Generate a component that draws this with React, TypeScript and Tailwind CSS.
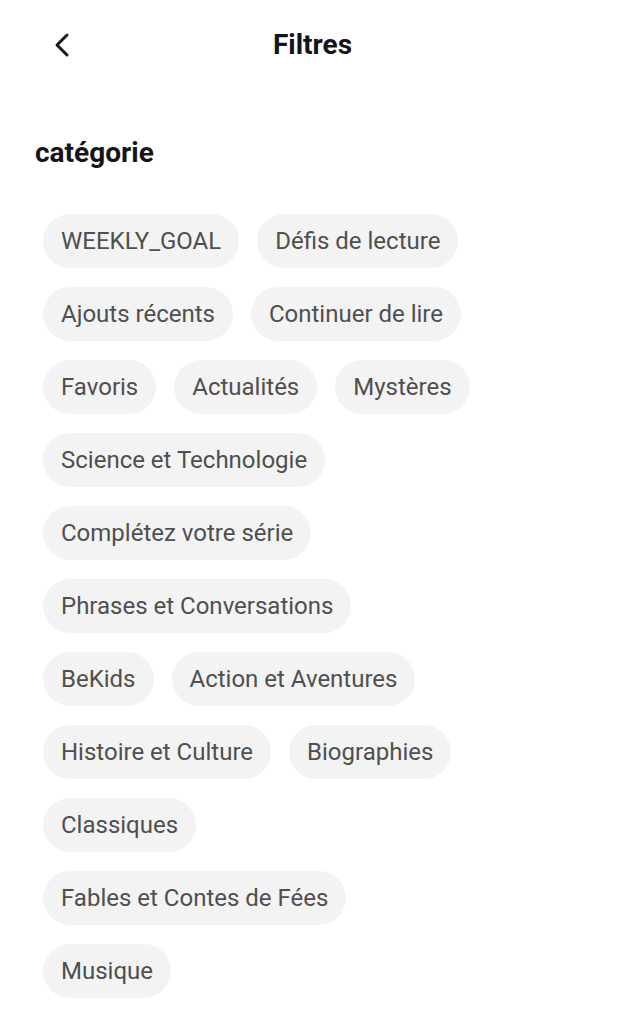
import { ChevronLeft } from 'lucide-react';

const categories = [
  'WEEKLY_GOAL',
  'Défis de lecture',
  'Ajouts récents',
  'Continuer de lire',
  'Favoris',
  'Actualités',
  'Mystères',
  'Science et Technologie',
  'Complétez votre série',
  'Phrases et Conversations',
  'BeKids',
  'Action et Aventures',
  'Histoire et Culture',
  'Biographies',
  'Classiques',
  'Fables et Contes de Fées',
  'Musique',
];

export default function App() {
  return (
    <div className="w-[625px] min-h-[1024px] bg-white font-['Roboto',sans-serif]">
      {/* header */}
      <header className="relative h-[90px] flex items-center justify-center">
        <button className="absolute left-[42px] top-[25px] text-[#1a1a1a]">
          <ChevronLeft size={40} strokeWidth={1.8} />
        </button>
        <h1 className="text-[28px] font-bold text-[#14151a]">Filtres</h1>
      </header>

      <section className="px-[35px] pt-[43px]">
        <h2 className="text-[28px] font-bold text-[#14151a] leading-[40px]">catégorie</h2>

        <div className="mt-[41px] ml-[8px] w-[432px] flex flex-wrap gap-x-[18px] gap-y-[19px]">
          {categories.map((c) => (
            <span
              key={c}
              className="h-[54px] px-[18px] flex items-center rounded-full bg-[#f3f3f3] text-[24px] text-[#4f4f4f]"
            >
              {c}
            </span>
          ))}
        </div>
      </section>
    </div>
  );
}
